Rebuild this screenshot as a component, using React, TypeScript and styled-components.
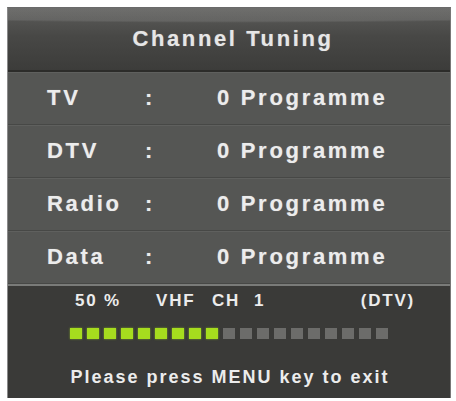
import React from 'react';
import styled, { createGlobalStyle } from 'styled-components';

const GlobalStyle = createGlobalStyle`
  html, body {
    margin: 0;
    padding: 0;
    background: #ffffff;
  }
  body {
    font-family: "Liberation Sans", Arial, sans-serif;
  }
`;

const Panel = styled.div`
  margin: 7px 0 0 7px;
  width: 444px;
  height: 391px;
  display: flex;
  flex-direction: column;
  background: #3a3a38;
  border-left: 1px solid #8a8a8a;
  border-top: 1px solid #6a6a6a;
  border-right: 1px solid #777;
  box-sizing: border-box;
  overflow: hidden;
  color: #ececec;
  font-weight: bold;
`;

const Header = styled.div`
  height: 62px;
  display: flex;
  align-items: center;
  justify-content: center;
  padding-left: 8px;
  background:
    radial-gradient(ellipse 230% 75% at 50% -30%, rgba(255, 255, 255, 0.12) 0%, rgba(255, 255, 255, 0.1) 68%, rgba(255, 255, 255, 0) 72%),
    linear-gradient(#5c5c5a 0%, #484846 45%, #3c3c3a 100%);
  border-bottom: 2px solid #2c2c2a;
`;

const Title = styled.div`
  font-size: 22px;
  letter-spacing: 2.6px;
  color: #e6e6e6;
  text-shadow: 0 0 1px rgba(255, 255, 255, 0.4);
`;

const Row = styled.div`
  height: 52px;
  display: grid;
  grid-template-columns: 98px 72px 1fr;
  align-items: center;
  padding-left: 39px;
  background: #555654;
  border-bottom: 1px solid #474846;
  box-shadow: inset 0 1px 0 #5f605e;
  font-size: 22px;
  letter-spacing: 2.7px;
  text-shadow: 0 0 1px rgba(255, 255, 255, 0.4);
`;

const LastRowLine = styled.div`
  height: 2px;
  background: #7a7b79;
`;

const Footer = styled.div`
  flex: 1;
  display: flex;
  flex-direction: column;
  padding-top: 5px;
`;

const InfoRow = styled.div`
  display: flex;
  align-items: center;
  padding: 0 35px 0 67px;
  font-size: 17px;
  letter-spacing: 1.8px;
  height: 20px;
`;

const InfoCell = styled.span<{ $w?: number }>`
  width: ${({ $w }) => ($w ? `${$w}px` : 'auto')};
  flex: none;
`;

const Mode = styled.span`
  margin-left: auto;
`;

const Bar = styled.div`
  display: flex;
  gap: 5px;
  padding-left: 62px;
  margin-top: 17px;
`;

const Cell = styled.div<{ $on: boolean }>`
  width: 12px;
  height: 11px;
  background: ${({ $on }) => ($on ? '#a6dc1e' : '#6c6c6a')};
  box-shadow: ${({ $on }) => ($on ? '0 0 2px rgba(170, 230, 30, 0.6)' : 'none')};
`;

const Exit = styled.div`
  margin-top: 28px;
  text-align: center;
  font-size: 18px;
  letter-spacing: 2px;
  padding-left: 2px;
`;

const rows = [
  { label: 'TV', value: '0 Programme' },
  { label: 'DTV', value: '0 Programme' },
  { label: 'Radio', value: '0 Programme' },
  { label: 'Data', value: '0 Programme' },
];

const TOTAL = 19;
const LIT = 9;

export default function App() {
  return (
    <>
      <GlobalStyle />
      <Panel>
        <Header>
          <Title>Channel Tuning</Title>
        </Header>
        {rows.map((r) => (
          <Row key={r.label}>
            <span>{r.label}</span>
            <span>:</span>
            <span>{r.value}</span>
          </Row>
        ))}
        <LastRowLine />
        <Footer>
          <InfoRow>
            <InfoCell $w={81}>50 %</InfoCell>
            <InfoCell $w={56}>VHF</InfoCell>
            <InfoCell $w={42}>CH</InfoCell>
            <InfoCell>1</InfoCell>
            <Mode>(DTV)</Mode>
          </InfoRow>
          <Bar>
            {Array.from({ length: TOTAL }, (_, i) => (
              <Cell key={i} $on={i < LIT} />
            ))}
          </Bar>
          <Exit>Please press MENU key to exit</Exit>
        </Footer>
      </Panel>
    </>
  );
}
